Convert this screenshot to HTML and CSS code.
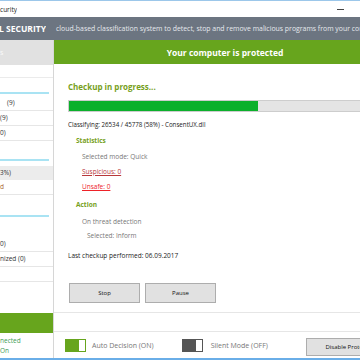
FILE: index.html
```html
<!DOCTYPE html>
<html lang="en">
<head>
    <meta charset="UTF-8">
    <title>Antiviral Security</title>
    <link rel="stylesheet" href="styles.css">
</head>
<body>
    <div class="window">
        <div class="titlebar">
            <div class="clip title-clip"><span>Antiviral Security</span></div>
            <div class="controls">
                <span class="ctl ctl-min"></span>
                <span class="ctl ctl-max"></span>
                <span class="ctl ctl-close">×</span>
            </div>
        </div>

        <div class="header">
            <div class="clip brand"><span>ANTIVIRAL SECURITY</span></div>
            <div class="tagline">cloud-based classification system to detect, stop and remove malicious programs from your computer</div>
        </div>

        <div class="content">
            <aside class="sidebar">
                <div class="side-head">s</div>
                <div class="side-top"></div>

                <div class="side-section first">
                    <div class="side-rule"></div>
                    <div class="side-row indent">(9)</div>
                    <div class="side-row">(9)</div>
                    <div class="side-row">0)</div>
                </div>

                <div class="side-section second">
                    <div class="side-rule"></div>
                    <div class="side-row active">3%)</div>
                    <div class="side-row warn">d</div>
                </div>

                <div class="side-section third">
                    <div class="side-rule"></div>
                    <div class="side-row">0)</div>
                    <div class="side-row">nized (0)</div>
                    <div class="side-row"></div>
                </div>

                <div class="side-spacer"></div>
                <div class="side-status-bar"></div>
                <div class="side-status">
                    <div>nected</div>
                    <div>On</div>
                </div>
            </aside>

            <main class="main">
                <div class="banner">Your computer is protected</div>

                <div class="panel">
                    <h2 class="panel-title">Checkup in progress...</h2>
                    <div class="progress">
                        <div class="progress-fill" style="width: 58%"></div>
                    </div>
                    <div class="line file">Classifying: 26534 / 45778 (58%) - ConsentUX.dll</div>

                    <div class="line group">Statistics</div>
                    <div class="line item">Selected mode: Quick</div>
                    <div class="line item link suspicious">Suspicious: 0</div>
                    <div class="line item link unsafe">Unsafe: 0</div>

                    <div class="line group action">Action</div>
                    <div class="line item threat">On threat detection</div>
                    <div class="line item sub">Selected: Inform</div>

                    <div class="line last">Last checkup performed: 06.09.2017</div>

                    <div class="buttons">
                        <button class="btn">Stop</button>
                        <button class="btn">Pause</button>
                    </div>
                </div>

                <div class="strip"></div>

                <div class="toolbar">
                    <div class="toggle-group">
                        <span class="toggle on"></span>
                        <span class="toggle-label">Auto Decision (ON)</span>
                    </div>
                    <div class="toggle-group silent">
                        <span class="toggle off"></span>
                        <span class="toggle-label">Silent Mode (OFF)</span>
                    </div>
                    <button class="btn btn-disable">Disable Protection</button>
                </div>
            </main>
        </div>
    </div>
</body>
</html>
```

FILE: styles.css
```css
body {
    margin: 0;
    font-family: "Open Sans", "Noto Sans", sans-serif;
    background-color: #fff;
    overflow: hidden;
}

.window {
    width: 410px;
    height: 360px;
    display: flex;
    flex-direction: column;
    border-top: 1px solid #9cc7ea;
    border-bottom: 2px solid #6aaee8;
    box-sizing: border-box;
}

.clip {
    display: flex;
    justify-content: flex-end;
    overflow: hidden;
    white-space: nowrap;
}

/* title bar */
.titlebar {
    height: 16px;
    display: flex;
    align-items: center;
    font-size: 6.5px;
    color: #222;
}

.title-clip {
    width: 17px;
}

.controls {
    margin-left: auto;
    display: flex;
    height: 16px;
}

.ctl {
    width: 28px;
    display: flex;
    align-items: center;
    justify-content: center;
    font-size: 10px;
    color: #333;
}

.ctl-min::before {
    content: "";
    width: 7px;
    border-top: 1px solid #444;
}

.ctl-max::before {
    content: "";
    width: 6px;
    height: 6px;
    border: 1px solid #444;
}

/* header */
.header {
    height: 23px;
    background-color: #6c7581;
    display: flex;
    align-items: center;
    color: #fff;
}

.brand {
    width: 46px;
    font-size: 8.5px;
    font-weight: bold;
}

.tagline {
    margin-left: 10px;
    font-size: 6.9px;
    color: #e6e9ee;
    white-space: nowrap;
}

/* content */
.content {
    flex: 1;
    display: flex;
    min-height: 0;
}

.sidebar {
    width: 53px;
    border-right: 1px solid #d6d6d6;
    display: flex;
    flex-direction: column;
    font-size: 6.5px;
    color: #333;
}

.side-head {
    height: 25px;
    background-color: #e1e1e1;
    color: #fafafa;
    line-height: 25px;
    font-size: 7px;
}

.side-top {
    height: 12px;
    border-bottom: 1px solid #ebebeb;
}

.side-rule {
    height: 2px;
    margin-right: 4px;
    background-color: #a9e3f3;
}

.side-section.first {
    margin-top: 14px;
}

.side-section.first .side-rule {
    margin-bottom: 2px;
}

.side-section.second {
    margin-top: 18px;
}

.side-section.second .side-rule {
    margin-bottom: 5px;
}

.side-section.third {
    margin-top: 20px;
}

.side-section.third .side-rule {
    margin-bottom: 20px;
}

.side-row {
    height: 14px;
    line-height: 14px;
    border-bottom: 1px solid #e6e6e6;
}

.side-row.indent {
    padding-left: 7px;
}

.side-row.active {
    background-color: #ececec;
    border-bottom: none;
}

.side-row.warn {
    color: #a8652c;
}

.side-spacer {
    flex: 1;
}

.side-status-bar {
    height: 20px;
    background-color: #67a51d;
}

.side-status {
    height: 25px;
    padding-top: 3px;
    box-sizing: border-box;
    color: #3d9c55;
    font-size: 6.5px;
    line-height: 10px;
}

/* main */
.main {
    flex: 1;
    display: flex;
    flex-direction: column;
}

.banner {
    height: 24px;
    background-color: #67a51d;
    color: #fff;
    font-size: 8.5px;
    font-weight: bold;
    display: flex;
    align-items: center;
    justify-content: center;
    padding-right: 14px;
}

.panel {
    flex: 1;
    padding: 16px 14px 0 14px;
    font-size: 6.5px;
    color: #222;
}

.panel-title {
    margin: 0;
    font-size: 8px;
    line-height: 14px;
    color: #76a01c;
}

.progress {
    margin-top: 6px;
    height: 12px;
    background-color: #e4e4e4;
    border: 1px solid #cdcdcd;
    box-sizing: border-box;
}

.progress-fill {
    height: 100%;
    background-color: #0bb02b;
}

.line {
    line-height: 14px;
}

.file {
    margin-top: 6px;
    font-size: 6.2px;
}

.group {
    margin-top: 2px;
    padding-left: 8px;
    font-weight: bold;
    color: #76a01c;
}

.group.action {
    margin-top: 4px;
}

.item {
    margin-top: 2px;
    padding-left: 14px;
    color: #777;
}

.link {
    margin-top: 1px;
    text-decoration: underline;
}

.suspicious {
    color: #b8383a;
}

.unsafe {
    color: #ee2228;
}

.threat {
    margin-top: 3px;
}

.sub {
    margin-top: 0;
    padding-left: 19px;
}

.last {
    margin-top: 6px;
}

.buttons {
    margin-top: 20px;
    display: flex;
    gap: 5px;
    padding-left: 1px;
}

.btn {
    width: 71px;
    height: 20px;
    padding: 0;
    background-color: #e1e1e1;
    border: 1px solid #adadad;
    font-family: "Open Sans", "Noto Sans", sans-serif;
    font-size: 6px;
    color: #111;
}

.strip {
    height: 18px;
    border-top: 1px solid #e6e6e6;
    border-bottom: 1px solid #e6e6e6;
}

.toolbar {
    height: 26px;
    display: flex;
    align-items: center;
    padding-left: 11px;
    font-size: 7px;
    color: #777;
}

.toggle-group {
    display: flex;
    align-items: center;
    gap: 6px;
}

.toggle-group.silent {
    margin-left: 28px;
    gap: 8px;
}

.toggle {
    width: 21px;
    height: 13px;
    box-sizing: border-box;
    border: 1px solid #67a51d;
    display: flex;
}

.toggle::before {
    content: "";
    width: 13px;
    height: 100%;
}

.toggle.on::before {
    background-color: #67a51d;
}

.toggle.off {
    border-color: #555;
}

.toggle.off::before {
    background-color: #555;
}

.btn-disable {
    margin-left: auto;
    margin-right: 14px;
    margin-top: 4px;
    width: 90px;
    height: 18px;
}
```
